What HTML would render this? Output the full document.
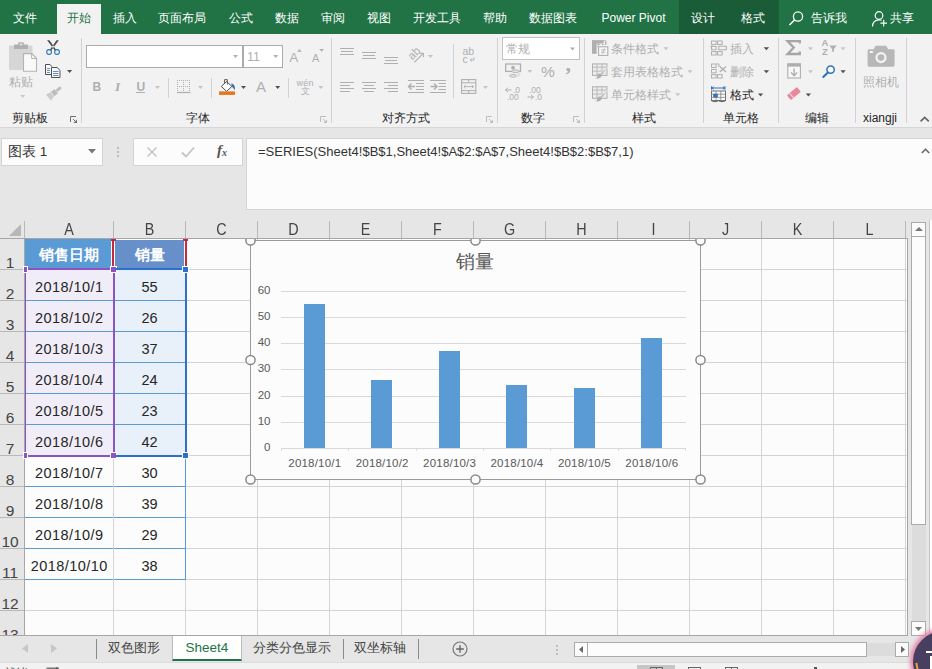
<!DOCTYPE html>
<html><head><meta charset="utf-8"><title>Excel</title>
<style>
*{box-sizing:border-box;margin:0;padding:0}
html,body{width:932px;height:669px;overflow:hidden;background:#e6e6e6}
body{font-family:"Liberation Sans",sans-serif;font-size:12px;color:#444;position:relative}
.abs,.abs *{position:absolute}
#root{position:absolute;left:0;top:0;width:932px;height:669px;overflow:hidden}
#root div,#root span,#root svg{position:absolute}
.t{white-space:nowrap;line-height:1}
.tab{color:#fff;font-size:12px;top:11px;height:14px;line-height:14px;text-align:center;white-space:nowrap}
.gl{color:#262626;font-size:12px;top:111px;height:14px;line-height:14px;text-align:center;white-space:nowrap}
.sep{width:1px;background:#d2d0d4;top:38px;height:85px}
.gry{color:#b1b1b1}
.colh{top:220px;height:18px;line-height:19px;font-size:16.5px;color:#444;text-align:center;transform:scaleX(0.87)}
.rowh{left:-2px;width:24px;text-align:center;font-size:15.5px;color:#444;height:16px;line-height:16px}
.cell{font-size:14.5px;color:#262626;text-align:center;height:30px;line-height:33px;white-space:nowrap}
.yl{font-size:11.5px;color:#595959;width:20px;text-align:right;height:12px;line-height:12px}
.xl{font-size:11.5px;color:#595959;width:68px;text-align:center;height:12px;line-height:12px;white-space:nowrap;letter-spacing:0.2px;text-indent:0.2px}
.stab{font-size:13px;color:#444;top:640px;height:15px;line-height:15px;white-space:nowrap;text-align:center}
</style></head><body><div id="root">

<div style="left:0;top:0;width:932px;height:34px;background:#217346"></div>
<div style="left:679px;top:0;width:100px;height:34px;background:#1b5c38"></div>
<div style="left:57px;top:4px;width:44px;height:31px;background:#f2f2f3"></div>
<div class="tab" style="left:13px;width:24px;">文件</div>
<div class="tab" style="left:67px;width:24px;color:#217346;">开始</div>
<div class="tab" style="left:113px;width:24px;">插入</div>
<div class="tab" style="left:158px;width:48px;">页面布局</div>
<div class="tab" style="left:229px;width:24px;">公式</div>
<div class="tab" style="left:275px;width:24px;">数据</div>
<div class="tab" style="left:321px;width:24px;">审阅</div>
<div class="tab" style="left:367px;width:24px;">视图</div>
<div class="tab" style="left:413px;width:48px;">开发工具</div>
<div class="tab" style="left:483px;width:24px;">帮助</div>
<div class="tab" style="left:529px;width:48px;">数据图表</div>
<div class="tab" style="left:599px;width:69px;">Power Pivot</div>
<div class="tab" style="left:691px;width:24px;">设计</div>
<div class="tab" style="left:741px;width:24px;">格式</div>
<div class="tab" style="left:811px;width:36px;">告诉我</div>
<div class="tab" style="left:890px;width:24px;">共享</div>
<svg style="left:788px;top:10px" width="17" height="17" viewBox="0 0 17 17"><circle cx="10" cy="6.5" r="4.6" fill="none" stroke="#fff" stroke-width="1.3"/><path d="M6.7 9.8L1.5 15" stroke="#fff" stroke-width="1.5" fill="none"/></svg>
<svg style="left:871px;top:10px" width="18" height="18" viewBox="0 0 18 18"><circle cx="8" cy="5.5" r="3.8" fill="none" stroke="#fff" stroke-width="1.2"/><path d="M1.5 16.5c0-4 2.5-6.7 6.5-6.7 1 0 1.8.2 2.5.5" fill="none" stroke="#fff" stroke-width="1.2"/><path d="M12.7 9.8v6.6M9.4 13.1h6.6" stroke="#fff" stroke-width="1.1"/></svg>
<div style="left:0;top:34px;width:932px;height:93px;background:#f2f2f3"></div>
<div style="left:0;top:127px;width:932px;height:1px;background:#d6d6d6"></div>
<div class="sep" style="left:81px"></div>
<div class="sep" style="left:331px"></div>
<div class="sep" style="left:497px"></div>
<div class="sep" style="left:584px"></div>
<div class="sep" style="left:703px"></div>
<div class="sep" style="left:778px"></div>
<div class="sep" style="left:855px"></div>
<div class="sep" style="left:906px"></div>
<div class="sep" style="left:168px;top:78px;height:20px"></div>
<div class="sep" style="left:211px;top:78px;height:20px"></div>
<div class="sep" style="left:288px;top:78px;height:20px"></div>
<div class="sep" style="left:453px;top:44px;height:54px"></div>
<div class="gl" style="left:12px;width:36px">剪贴板</div>
<div class="gl" style="left:186px;width:24px">字体</div>
<div class="gl" style="left:382px;width:48px">对齐方式</div>
<div class="gl" style="left:521px;width:24px">数字</div>
<div class="gl" style="left:632px;width:24px">样式</div>
<div class="gl" style="left:723px;width:36px">单元格</div>
<div class="gl" style="left:805px;width:24px">编辑</div>
<div class="gl" style="left:860px;width:40px">xiangji</div>
<svg style="left:70px;top:116px" width="8" height="8" viewBox="0 0 8 8"><path d="M0.5 6V0.5H6" fill="none" stroke="#707070"/><path d="M7 3.4V7H3.4z" fill="#707070"/><path d="M3 3l3.2 3.2" stroke="#707070" stroke-width="1" fill="none"/></svg>
<svg style="left:320px;top:116px" width="8" height="8" viewBox="0 0 8 8"><path d="M0.5 6V0.5H6" fill="none" stroke="#bcbcbc"/><path d="M7 3.4V7H3.4z" fill="#bcbcbc"/><path d="M3 3l3.2 3.2" stroke="#bcbcbc" stroke-width="1" fill="none"/></svg>
<svg style="left:486px;top:116px" width="8" height="8" viewBox="0 0 8 8"><path d="M0.5 6V0.5H6" fill="none" stroke="#bcbcbc"/><path d="M7 3.4V7H3.4z" fill="#bcbcbc"/><path d="M3 3l3.2 3.2" stroke="#bcbcbc" stroke-width="1" fill="none"/></svg>
<svg style="left:573px;top:116px" width="8" height="8" viewBox="0 0 8 8"><path d="M0.5 6V0.5H6" fill="none" stroke="#bcbcbc"/><path d="M7 3.4V7H3.4z" fill="#bcbcbc"/><path d="M3 3l3.2 3.2" stroke="#bcbcbc" stroke-width="1" fill="none"/></svg>
<div style="left:86px;top:45px;width:157px;height:23px;background:#fff;border:1px solid #ababab"></div>
<div style="left:243px;top:45px;width:40px;height:23px;background:#fff;border:1px solid #ababab"></div>
<div style="left:502px;top:37px;width:78px;height:23px;background:#fff;border:1px solid #c2c2c2"></div>
<div class="t" style="left:9px;top:76px;font-size:12px;color:#afafaf">粘贴</div>
<div class="t" style="left:247px;top:50.5px;font-size:12.5px;color:#afafaf">11</div>
<div class="t" style="left:92.5px;top:80.5px;font-size:12px;font-weight:bold;color:#afafaf">B</div>
<div class="t" style="left:115px;top:79.5px;font-size:13.5px;font-weight:bold;font-style:italic;font-family:'Liberation Serif',serif;color:#afafaf">I</div>
<div class="t" style="left:136.5px;top:80.5px;font-size:12px;font-weight:bold;color:#afafaf">U</div>
<div style="left:136px;top:92px;width:9px;height:1px;background:#afafaf"></div>
<div class="t" style="left:289.5px;top:50.5px;font-size:13px;color:#afafaf">A</div>
<div class="t" style="left:312px;top:52.5px;font-size:11px;color:#afafaf">A</div>
<div class="t" style="left:256px;top:78.5px;font-size:15px;color:#afafaf">A</div>
<div class="t" style="left:296.5px;top:78.5px;font-size:9px;color:#afafaf;letter-spacing:0.3px">wén</div>
<div class="t" style="left:300.5px;top:87px;font-size:8.5px;color:#afafaf">文</div>
<div class="t" style="left:506px;top:42.5px;font-size:12px;color:#afafaf">常规</div>
<div class="t" style="left:541px;top:63.5px;font-size:15.5px;color:#afafaf">%</div>
<div class="t" style="left:565.5px;top:53px;font-size:22px;font-weight:bold;color:#afafaf;font-family:'Liberation Serif',serif">,</div>
<div class="t" style="left:462.5px;top:46px;font-size:10.5px;color:#afafaf">ab</div>
<div class="t" style="left:462.5px;top:54px;font-size:10.5px;color:#afafaf">c</div>
<div class="t" style="left:513px;top:85.5px;font-size:8.5px;color:#afafaf">.0</div>
<div class="t" style="left:507px;top:92.5px;font-size:8.5px;color:#afafaf">.00</div>
<div class="t" style="left:529px;top:85.5px;font-size:8.5px;color:#afafaf">.00</div>
<div class="t" style="left:535px;top:92.5px;font-size:8.5px;color:#afafaf">.0</div>
<div class="t" style="left:611px;top:42.5px;font-size:12px;color:#afafaf">条件格式</div>
<div class="t" style="left:611px;top:65.5px;font-size:12px;color:#afafaf">套用表格格式</div>
<div class="t" style="left:611px;top:88.5px;font-size:12px;color:#afafaf">单元格样式</div>
<div class="t" style="left:730px;top:42.5px;font-size:12px;color:#afafaf">插入</div>
<div class="t" style="left:730px;top:65.5px;font-size:12px;color:#afafaf">删除</div>
<div class="t" style="left:730px;top:88.5px;font-size:12px;color:#262626">格式</div>
<div class="t" style="left:863px;top:75.5px;font-size:12px;color:#afafaf">照相机</div>
<div class="t" style="left:407.5px;top:48px;font-size:11.5px;color:#afafaf;transform:rotate(-45deg);transform-origin:50% 50%">ab</div>
<div class="t" style="left:821.5px;top:38px;font-size:9.5px;color:#afafaf;font-weight:bold">A</div>
<div class="t" style="left:822px;top:46.5px;font-size:9.5px;color:#afafaf;font-weight:bold">Z</div>
<svg style="left:0;top:34px" width="932" height="94" viewBox="0 34 932 94"><rect x="9" y="45.5" width="23.5" height="24.5" rx="1" fill="#d6d6d6"/><path d="M14 49v-3.4q0-1 1-1h3.2v-1.3q0-1 1-1h3.6q1 0 1 1v1.3h3.2q1 0 1 1v3.4z" fill="#b0b0b0"/><rect x="19.7" y="43.6" width="2.6" height="1.6" fill="#e8e8e8"/><path d="M23.5 53.6h8.3l4.7 4.7v12.9h-13z" fill="#f9f9f9" stroke="#b4b4b4" stroke-width="1.1"/><path d="M31.6 53.8v4.7h4.7" fill="none" stroke="#b4b4b4" stroke-width="1"/><path d="M20.3 95h5l-2.5 2.8z" fill="#c4c4c4"/><path d="M47.1 40.3h2.4l6.8 9.6-1.3 0.9zM58.9 40.3h-2.4l-6.8 9.6 1.3 0.9z" fill="#505050"/><circle cx="49.1" cy="52" r="2.4" fill="none" stroke="#2e75b6" stroke-width="1.1"/><circle cx="57" cy="52" r="2.4" fill="none" stroke="#2e75b6" stroke-width="1.1"/><path d="M45.5 64.5h4.4l2.6 2.6v7.4h-7z" fill="#fafafa" stroke="#505050" stroke-width="1"/><path d="M51.5 67.5h5.6l2.9 2.9v7.1h-8.5z" fill="#fafafa" stroke="#505050" stroke-width="1"/><path d="M47 68.5h3M47 70.5h3M47 72.5h3M53 71.5h5.5M53 73.5h5.5M53 75.5h5.5" stroke="#2e75b6" stroke-width="0.8"/><path d="M67 70h5.2l-2.6 3z" fill="#505050"/><g transform="rotate(-40 54 93)" fill="#bdbdbd"><rect x="57.3" y="91.6" width="5.6" height="2.8" rx="0.5"/><rect x="52.3" y="90.2" width="4.6" height="5.6"/><path d="M51.7 90.2L46.8 89v8l4.9-1.2z" opacity="0.7"/></g><path d="M233 55h5l-2.5 3z" fill="#afafaf"/><path d="M273.2 55h5l-2.5 3z" fill="#afafaf"/><path d="M155 86h5l-2.5 3z" fill="#c4c4c4"/><path d="M198 86h5l-2.5 3z" fill="#c4c4c4"/><path d="M241 86h5l-2.5 3z" fill="#505050"/><path d="M275.2 86h5l-2.5 3z" fill="#505050"/><path d="M318.3 86h5l-2.5 3z" fill="#c4c4c4"/><path d="M297.2 51.7h4.6l-2.3-2.7z" fill="#afafaf"/><path d="M319.2 49h4.8l-2.4 2.7z" fill="#afafaf"/><rect x="177" y="80" width="1" height="1" fill="#afafaf"/><rect x="179" y="80" width="1" height="1" fill="#afafaf"/><rect x="181" y="80" width="1" height="1" fill="#afafaf"/><rect x="183" y="80" width="1" height="1" fill="#afafaf"/><rect x="185" y="80" width="1" height="1" fill="#afafaf"/><rect x="187" y="80" width="1" height="1" fill="#afafaf"/><rect x="189" y="80" width="1" height="1" fill="#afafaf"/><rect x="177" y="86" width="1" height="1" fill="#afafaf"/><rect x="179" y="86" width="1" height="1" fill="#afafaf"/><rect x="181" y="86" width="1" height="1" fill="#afafaf"/><rect x="183" y="86" width="1" height="1" fill="#afafaf"/><rect x="185" y="86" width="1" height="1" fill="#afafaf"/><rect x="187" y="86" width="1" height="1" fill="#afafaf"/><rect x="189" y="86" width="1" height="1" fill="#afafaf"/><rect x="177" y="80" width="1" height="1" fill="#afafaf"/><rect x="177" y="82" width="1" height="1" fill="#afafaf"/><rect x="177" y="84" width="1" height="1" fill="#afafaf"/><rect x="177" y="86" width="1" height="1" fill="#afafaf"/><rect x="177" y="88" width="1" height="1" fill="#afafaf"/><rect x="177" y="90" width="1" height="1" fill="#afafaf"/><rect x="183" y="80" width="1" height="1" fill="#afafaf"/><rect x="183" y="82" width="1" height="1" fill="#afafaf"/><rect x="183" y="84" width="1" height="1" fill="#afafaf"/><rect x="183" y="86" width="1" height="1" fill="#afafaf"/><rect x="183" y="88" width="1" height="1" fill="#afafaf"/><rect x="183" y="90" width="1" height="1" fill="#afafaf"/><rect x="189" y="80" width="1" height="1" fill="#afafaf"/><rect x="189" y="82" width="1" height="1" fill="#afafaf"/><rect x="189" y="84" width="1" height="1" fill="#afafaf"/><rect x="189" y="86" width="1" height="1" fill="#afafaf"/><rect x="189" y="88" width="1" height="1" fill="#afafaf"/><rect x="189" y="90" width="1" height="1" fill="#afafaf"/><path d="M177 92.5h13.5" stroke="#afafaf" stroke-width="1.2"/><path d="M226.6 81.5l5.3 4.9-5.3 4.9-5.3-4.9z" fill="#fff" stroke="#505050" stroke-width="1"/><path d="M224.6 83.2v-3.6h2.7v5" fill="none" stroke="#505050" stroke-width="0.9"/><path d="M231.4 83.3c2.7 0.8 4.1 3.5 3.4 6.8l-3-3.7z" fill="#2e75b6"/><rect x="219" y="91.4" width="16" height="3.5" fill="#e8751a"/><path d="M340 48.5H354M341 51.5H353M340 54.5H354" stroke="#afafaf" stroke-width="1" fill="none"/><path d="M362 52.5H376M363 55.5H375M362 58.5H376" stroke="#afafaf" stroke-width="1" fill="none"/><path d="M384 57.5H398M385 60.5H397M384 63.5H398" stroke="#afafaf" stroke-width="1" fill="none"/><path d="M340 82.5H354M340 85.5H350M340 88.5H354M340 91.5H350" stroke="#afafaf" stroke-width="1" fill="none"/><path d="M362 82.5H376M364 85.5H374M362 88.5H376M364 91.5H374" stroke="#afafaf" stroke-width="1" fill="none"/><path d="M384 82.5H398M388 85.5H398M384 88.5H398M388 91.5H398" stroke="#afafaf" stroke-width="1" fill="none"/><path d="M414.3 62.3L423 53.6" stroke="#afafaf" stroke-width="1.1" fill="none"/><path d="M419.3 53.3h4v4" stroke="#afafaf" stroke-width="1.1" fill="none"/><path d="M428 55h5l-2.5 3z" fill="#c4c4c4"/><path d="M408 80.5H424M408 92.5H424" stroke="#afafaf" stroke-width="1" fill="none"/><path d="M416 83.5H424M416 86.5H424M416 89.5H424" stroke="#afafaf" stroke-width="1" fill="none"/><path d="M408.5 86.5h6.5M411.5 83.5l-3 3 3 3" stroke="#afafaf" stroke-width="1.4" fill="none"/><path d="M430 80.5H446M430 92.5H446" stroke="#afafaf" stroke-width="1" fill="none"/><path d="M438.5 83.5H446M438.5 86.5H446M438.5 89.5H446" stroke="#afafaf" stroke-width="1" fill="none"/><path d="M430.5 86.5h6.5M434 83.5l3 3-3 3" stroke="#afafaf" stroke-width="1.4" fill="none"/><path d="M474 57.5v2.5h-3.5M472 58.3l-1.7 1.7 1.7 1.7" stroke="#afafaf" stroke-width="0.9" fill="none"/><rect x="461.6" y="79.6" width="14.2" height="13.8" fill="none" stroke="#afafaf" stroke-width="1.1"/><path d="M461.6 82.8h14.2M461.6 90.6h14.2M468.7 79.6v3.2M468.7 90.6v2.8" stroke="#afafaf" stroke-width="1" fill="none"/><path d="M464 86.6h9.4M465.6 85l-1.7 1.6 1.7 1.6M471.8 85l1.7 1.6-1.7 1.6" stroke="#afafaf" stroke-width="0.9" fill="none"/><path d="M483 86h5l-2.5 3z" fill="#c4c4c4"/><path d="M570 47.4h5l-2.5 3z" fill="#afafaf"/><rect x="505.7" y="64" width="14.8" height="7.4" fill="none" stroke="#afafaf" stroke-width="1.3"/><circle cx="513" cy="67.7" r="1.9" fill="#afafaf"/><ellipse cx="515.5" cy="71.3" rx="3.6" ry="1.4" fill="#e0e0e0" stroke="#afafaf" stroke-width="0.8"/><ellipse cx="513" cy="75.8" rx="3.6" ry="1.4" fill="#e0e0e0" stroke="#afafaf" stroke-width="0.8"/><path d="M517.5 74h3M517.5 76h2" stroke="#c4c4c4" stroke-width="0.8"/><path d="M527.3 70h5l-2.5 3z" fill="#c4c4c4"/><path d="M505.5 90h6M508 87.7l-2.4 2.3 2.4 2.3" stroke="#afafaf" stroke-width="1" fill="none"/><path d="M527.5 97h6M531 94.7l2.4 2.3-2.4 2.3" stroke="#afafaf" stroke-width="1" fill="none"/><rect x="592" y="40.3" width="4.6" height="13.5" fill="#afafaf"/><rect x="592" y="40.3" width="11.6" height="3.2" fill="#afafaf"/><path d="M598 44.5h2.2M602 44.5h2.2M598 40.3v3M602 40.3v3M606 40.8v4" stroke="#afafaf" stroke-width="0.9"/><path d="M598 47.5v-6.8h7.5v4" fill="none" stroke="#afafaf" stroke-width="0.8"/><rect x="598.6" y="46.8" width="9.2" height="8.6" fill="#f8f8f8" stroke="#afafaf" stroke-width="1.1"/><path d="M601 49.8h4.6M601 52.2h4.6M604.6 48.4l-2.4 5.4" stroke="#afafaf" stroke-width="0.8"/><rect x="592.5" y="63.9" width="14.5" height="11.5" fill="#ececec" stroke="#afafaf" stroke-width="1"/><path d="M592.5 67.2h14.5M592.5 71.2h9M597 63.9v11.5M602 63.9v8" stroke="#afafaf" stroke-width="0.8"/><path d="M608.3 66.6l-6.2 8.3-1.8-1.3z" fill="#afafaf" stroke="#f3f3f3" stroke-width="0.6"/><path d="M600.6 73.7c-2.6-0.6-4 1.4-3.4 3.6-0.6 0.6-1.6 0.7-2.4 0.6 2.4 1.4 6.4 0.6 7.3-2.9z" fill="#afafaf"/><rect x="592.5" y="86.8" width="14.5" height="11.5" fill="#ececec" stroke="#afafaf" stroke-width="1"/><path d="M592.5 90.1h14.5M592.5 94.1h9M597 86.8v11.5M602 86.8v8" stroke="#afafaf" stroke-width="0.8"/><path d="M608.3 89.5l-6.2 8.3-1.8-1.3z" fill="#afafaf" stroke="#f3f3f3" stroke-width="0.6"/><path d="M600.6 96.6c-2.6-0.6-4 1.4-3.4 3.6-0.6 0.6-1.6 0.7-2.4 0.6 2.4 1.4 6.4 0.6 7.3-2.9z" fill="#afafaf"/><path d="M663.5 47.3h5l-2.5 3z" fill="#c4c4c4"/><path d="M687.5 70.3h5l-2.5 3z" fill="#c4c4c4"/><path d="M675.2 93.3h5l-2.5 3z" fill="#c4c4c4"/><rect x="711.5" y="41" width="4.6" height="3.4" fill="none" stroke="#afafaf" stroke-width="1"/><rect x="717.5" y="41" width="4.6" height="3.4" fill="none" stroke="#afafaf" stroke-width="1"/><rect x="711.5" y="51.6" width="4.6" height="3.4" fill="none" stroke="#afafaf" stroke-width="1"/><rect x="717.5" y="51.6" width="4.6" height="3.4" fill="none" stroke="#afafaf" stroke-width="1"/><rect x="711.5" y="46.4" width="4.6" height="3.4" fill="none" stroke="#afafaf" stroke-width="1"/><rect x="718.8" y="46.2" width="7.6" height="3.6" fill="none" stroke="#afafaf" stroke-width="1"/><path d="M712.3 45.2l-1.6 1.6 1.6 1.6" stroke="#afafaf" stroke-width="1" fill="none"/><rect x="711.5" y="64" width="4.6" height="3.4" fill="none" stroke="#afafaf" stroke-width="1"/><rect x="711.5" y="74.6" width="4.6" height="3.4" fill="none" stroke="#afafaf" stroke-width="1"/><rect x="717.5" y="74.6" width="4.6" height="3.4" fill="none" stroke="#afafaf" stroke-width="1"/><rect x="711.5" y="69.4" width="4.6" height="3.4" fill="none" stroke="#afafaf" stroke-width="1"/><path d="M719.8 66.5l6.2 5.6M726 66.5l-6.2 5.6" stroke="#afafaf" stroke-width="1.3" fill="none"/><path d="M716.5 64h2.5v3" stroke="#afafaf" stroke-width="1" fill="none"/><path d="M711.5 88h13.5M711.5 86.3v3.4M725 86.3v3.4M713.6 86.6l-1.6 1.4 1.6 1.4M722.9 86.6l1.6 1.4-1.6 1.4" stroke="#2e75b6" stroke-width="1" fill="none"/><rect x="711.5" y="91" width="14" height="9.6" fill="#fafafa" stroke="#666" stroke-width="0.9"/><path d="M711.5 94.2h14M711.5 97.4h14M716 91v9.6M720.8 91v9.6" stroke="#777" stroke-width="0.7"/><rect x="713.2" y="93.8" width="4.6" height="3.6" fill="#2e75b6"/><path d="M711.5 100.6c2 1.4 5 1.4 7 0 2 1.4 5 1.4 7 0" stroke="#505050" stroke-width="0.9" fill="none"/><path d="M763.7 47.2h5.4l-2.7 3z" fill="#505050"/><path d="M763.7 70.2h5.4l-2.7 3z" fill="#505050"/><path d="M758 93.4h5.2l-2.6 3z" fill="#505050"/><path d="M799.8 43.6v-2.4h-12.2l6.2 6.4-6.2 6.4h12.2v-2.4" fill="none" stroke="#a6a6a6" stroke-width="2.3" stroke-linejoin="miter"/><path d="M808 47.3h5l-2.5 3z" fill="#c4c4c4"/><rect x="787.8" y="64" width="12.6" height="14" fill="#f8f8f8" stroke="#afafaf" stroke-width="1.1"/><rect x="787.3" y="63.4" width="13.6" height="3.2" fill="#afafaf"/><path d="M794.1 68.5v7M791 72.6l3.1 3.1 3.1-3.1" stroke="#afafaf" stroke-width="1.4" fill="none"/><path d="M808 70.3h5l-2.5 3z" fill="#c4c4c4"/><g transform="rotate(-40 794 93.5)"><rect x="787.4" y="90.4" width="13" height="6.2" rx="0.8" fill="#e8889c"/><rect x="790.4" y="90.4" width="0.9" height="6.2" fill="#f6d4db"/></g><path d="M805.8 93.4h5.2l-2.6 3z" fill="#505050"/><path d="M829.3 45.6h7.4l-2.8 3.4v3.2l-1.8-1v-2.2z" fill="#afafaf"/><path d="M840.5 47.3h5l-2.5 3z" fill="#c4c4c4"/><circle cx="830.6" cy="69.6" r="3.7" fill="#fafafa" stroke="#2e75b6" stroke-width="1.5"/><path d="M827.9 72.6l-4.6 4.4" stroke="#2e75b6" stroke-width="2.1" stroke-linecap="round"/><path d="M840.5 70.3h5.2l-2.6 3z" fill="#505050"/><path d="M869 49.3h4.6l2-3.6h10.6l2 3.6h5q1.4 0 1.4 1.4v14.6q0 1.4-1.4 1.4h-24.2q-1.4 0-1.4-1.4v-14.6q0-1.4 1.4-1.4z" fill="#b7b7b7"/><circle cx="881" cy="57.6" r="5.6" fill="#f3f3f3"/><circle cx="881" cy="57.6" r="3.3" fill="#b7b7b7"/><rect x="869.6" y="51" width="3.4" height="2" fill="#f3f3f3"/><path d="M920.6 121.4l4.1-4 4.1 4" stroke="#666" stroke-width="1.7" fill="none"/></svg>
<div style="left:1px;top:138px;width:102px;height:28px;background:#fcfcfc;border:1px solid #d4d4d4"></div>
<div class="t" style="left:8px;top:145px;font-size:13.5px;color:#333">图表 1</div>
<svg style="left:88px;top:149px" width="8" height="5"><path d="M0 0h8L4 4.5z" fill="#777"/></svg>
<div style="left:117px;top:147px;width:2px;height:2px;background:#bdbdbd"></div>
<div style="left:117px;top:151px;width:2px;height:2px;background:#bdbdbd"></div>
<div style="left:117px;top:155px;width:2px;height:2px;background:#bdbdbd"></div>
<div style="left:133px;top:138px;width:110px;height:28px;background:#fcfcfc;border:1px solid #d4d4d4"></div>
<svg style="left:146px;top:146px" width="12" height="12"><path d="M1.5 1.5l9 9M10.5 1.5l-9 9" stroke="#c3c3c3" stroke-width="1.4" fill="none"/></svg>
<svg style="left:181px;top:146px" width="14" height="12"><path d="M1 6.5l4 4L13 1.5" stroke="#c3c3c3" stroke-width="1.8" fill="none"/></svg>
<div class="t" style="left:217px;top:143px;font-family:'Liberation Serif',serif;font-style:italic;font-size:15px;color:#555;font-weight:bold">f<span style="position:relative;font-size:10px;left:0;top:1px">x</span></div>
<div style="left:246px;top:138px;width:690px;height:72px;background:#fcfcfc;border:1px solid #d4d4d4"></div>
<div class="t" id="fx" style="left:258px;top:145px;font-size:13px;color:#333;letter-spacing:0px">=SERIES(Sheet4!$B$1,Sheet4!$A$2:$A$7,Sheet4!$B$2:$B$7,1)</div>
<svg style="left:921px;top:148px" width="9" height="6"><path d="M0.8 5L4.5 1.3 8.2 5" stroke="#666" stroke-width="1.6" fill="none"/></svg>
<div style="left:25px;top:239px;width:882px;height:396px;background:#fcfcfc"></div>
<div style="left:24px;top:221px;width:1px;height:18px;background:#b9b9b9"></div>
<div style="left:113px;top:221px;width:1px;height:18px;background:#b9b9b9"></div>
<div style="left:185px;top:221px;width:1px;height:18px;background:#b9b9b9"></div>
<div style="left:257px;top:221px;width:1px;height:18px;background:#b9b9b9"></div>
<div style="left:329px;top:221px;width:1px;height:18px;background:#b9b9b9"></div>
<div style="left:401px;top:221px;width:1px;height:18px;background:#b9b9b9"></div>
<div style="left:473px;top:221px;width:1px;height:18px;background:#b9b9b9"></div>
<div style="left:545px;top:221px;width:1px;height:18px;background:#b9b9b9"></div>
<div style="left:617px;top:221px;width:1px;height:18px;background:#b9b9b9"></div>
<div style="left:689px;top:221px;width:1px;height:18px;background:#b9b9b9"></div>
<div style="left:761px;top:221px;width:1px;height:18px;background:#b9b9b9"></div>
<div style="left:833px;top:221px;width:1px;height:18px;background:#b9b9b9"></div>
<div style="left:905px;top:221px;width:1px;height:18px;background:#b9b9b9"></div>
<div style="left:0;top:238px;width:907px;height:1px;background:#a6a6a6"></div>
<div style="left:24px;top:239px;width:1px;height:396px;background:#a6a6a6"></div>
<svg style="left:9px;top:224px" width="13" height="13"><path d="M12 0v12H0z" fill="#b7b7b7"/></svg>
<div class="colh" style="left:25px;width:88px">A</div>
<div class="colh" style="left:114px;width:71px">B</div>
<div class="colh" style="left:186px;width:71px">C</div>
<div class="colh" style="left:258px;width:71px">D</div>
<div class="colh" style="left:330px;width:71px">E</div>
<div class="colh" style="left:402px;width:71px">F</div>
<div class="colh" style="left:474px;width:71px">G</div>
<div class="colh" style="left:546px;width:71px">H</div>
<div class="colh" style="left:618px;width:71px">I</div>
<div class="colh" style="left:690px;width:71px">J</div>
<div class="colh" style="left:762px;width:71px">K</div>
<div class="colh" style="left:834px;width:71px">L</div>
<div style="left:113px;top:239px;width:1px;height:396px;background:#d4d4d4"></div>
<div style="left:185px;top:239px;width:1px;height:396px;background:#d4d4d4"></div>
<div style="left:257px;top:239px;width:1px;height:396px;background:#d4d4d4"></div>
<div style="left:329px;top:239px;width:1px;height:396px;background:#d4d4d4"></div>
<div style="left:401px;top:239px;width:1px;height:396px;background:#d4d4d4"></div>
<div style="left:473px;top:239px;width:1px;height:396px;background:#d4d4d4"></div>
<div style="left:545px;top:239px;width:1px;height:396px;background:#d4d4d4"></div>
<div style="left:617px;top:239px;width:1px;height:396px;background:#d4d4d4"></div>
<div style="left:689px;top:239px;width:1px;height:396px;background:#d4d4d4"></div>
<div style="left:761px;top:239px;width:1px;height:396px;background:#d4d4d4"></div>
<div style="left:833px;top:239px;width:1px;height:396px;background:#d4d4d4"></div>
<div style="left:905px;top:239px;width:1px;height:396px;background:#d4d4d4"></div>
<div style="left:25px;top:269px;width:882px;height:1px;background:#d4d4d4"></div>
<div style="left:0px;top:269px;width:24px;height:1px;background:#b9b9b9"></div>
<div style="left:25px;top:300px;width:882px;height:1px;background:#d4d4d4"></div>
<div style="left:0px;top:300px;width:24px;height:1px;background:#b9b9b9"></div>
<div style="left:25px;top:331px;width:882px;height:1px;background:#d4d4d4"></div>
<div style="left:0px;top:331px;width:24px;height:1px;background:#b9b9b9"></div>
<div style="left:25px;top:362px;width:882px;height:1px;background:#d4d4d4"></div>
<div style="left:0px;top:362px;width:24px;height:1px;background:#b9b9b9"></div>
<div style="left:25px;top:393px;width:882px;height:1px;background:#d4d4d4"></div>
<div style="left:0px;top:393px;width:24px;height:1px;background:#b9b9b9"></div>
<div style="left:25px;top:424px;width:882px;height:1px;background:#d4d4d4"></div>
<div style="left:0px;top:424px;width:24px;height:1px;background:#b9b9b9"></div>
<div style="left:25px;top:455px;width:882px;height:1px;background:#d4d4d4"></div>
<div style="left:0px;top:455px;width:24px;height:1px;background:#b9b9b9"></div>
<div style="left:25px;top:486px;width:882px;height:1px;background:#d4d4d4"></div>
<div style="left:0px;top:486px;width:24px;height:1px;background:#b9b9b9"></div>
<div style="left:25px;top:517px;width:882px;height:1px;background:#d4d4d4"></div>
<div style="left:0px;top:517px;width:24px;height:1px;background:#b9b9b9"></div>
<div style="left:25px;top:548px;width:882px;height:1px;background:#d4d4d4"></div>
<div style="left:0px;top:548px;width:24px;height:1px;background:#b9b9b9"></div>
<div style="left:25px;top:579px;width:882px;height:1px;background:#d4d4d4"></div>
<div style="left:0px;top:579px;width:24px;height:1px;background:#b9b9b9"></div>
<div style="left:25px;top:610px;width:882px;height:1px;background:#d4d4d4"></div>
<div style="left:0px;top:610px;width:24px;height:1px;background:#b9b9b9"></div>
<div class="rowh" style="top:254.5px">1</div>
<div class="rowh" style="top:285.5px">2</div>
<div class="rowh" style="top:316.5px">3</div>
<div class="rowh" style="top:347.5px">4</div>
<div class="rowh" style="top:378.5px">5</div>
<div class="rowh" style="top:409.5px">6</div>
<div class="rowh" style="top:440.5px">7</div>
<div class="rowh" style="top:471.5px">8</div>
<div class="rowh" style="top:502.5px">9</div>
<div class="rowh" style="top:533.5px">10</div>
<div class="rowh" style="top:564.5px">11</div>
<div class="rowh" style="top:595.5px">12</div>
<div class="rowh" style="top:626.5px">13</div>
<div style="left:907px;top:238px;width:1px;height:398px;background:#a6a6a6"></div>
<div style="left:0;top:635px;width:908px;height:1px;background:#a6a6a6"></div>
<div style="left:25px;top:239px;width:86px;height:29px;background:#5b9bd5"></div>
<div style="left:115px;top:240px;width:69px;height:28px;background:#6790cb"></div>
<div style="left:25px;top:270px;width:88px;height:185px;background:#f1edf8"></div>
<div style="left:115px;top:270px;width:70px;height:185px;background:#e8f0fa"></div>
<div style="left:25px;top:300px;width:161px;height:1px;background:#5b9bd5"></div>
<div style="left:25px;top:331px;width:161px;height:1px;background:#5b9bd5"></div>
<div style="left:25px;top:362px;width:161px;height:1px;background:#5b9bd5"></div>
<div style="left:25px;top:393px;width:161px;height:1px;background:#5b9bd5"></div>
<div style="left:25px;top:424px;width:161px;height:1px;background:#5b9bd5"></div>
<div style="left:25px;top:455px;width:161px;height:1px;background:#5b9bd5"></div>
<div style="left:25px;top:486px;width:161px;height:1px;background:#5b9bd5"></div>
<div style="left:25px;top:517px;width:161px;height:1px;background:#5b9bd5"></div>
<div style="left:25px;top:548px;width:161px;height:1px;background:#5b9bd5"></div>
<div style="left:25px;top:579px;width:161px;height:1px;background:#5b9bd5"></div>
<div style="left:185px;top:456px;width:1px;height:124px;background:#5b9bd5"></div>
<div style="left:113px;top:456px;width:1px;height:124px;background:#d4d4d4"></div>
<div class="cell" style="left:25px;top:240px;width:88px;color:#fff;font-weight:bold;font-size:15px;line-height:30px">销售日期</div>
<div class="cell" style="left:114px;top:240px;width:71px;color:#fff;font-weight:bold;font-size:15px;line-height:30px">销量</div>
<div class="cell" style="left:25px;top:271px;width:88px;letter-spacing:0.45px;text-indent:0.45px">2018/10/1</div>
<div class="cell" style="left:114px;top:271px;width:71px">55</div>
<div class="cell" style="left:25px;top:302px;width:88px;letter-spacing:0.45px;text-indent:0.45px">2018/10/2</div>
<div class="cell" style="left:114px;top:302px;width:71px">26</div>
<div class="cell" style="left:25px;top:333px;width:88px;letter-spacing:0.45px;text-indent:0.45px">2018/10/3</div>
<div class="cell" style="left:114px;top:333px;width:71px">37</div>
<div class="cell" style="left:25px;top:364px;width:88px;letter-spacing:0.45px;text-indent:0.45px">2018/10/4</div>
<div class="cell" style="left:114px;top:364px;width:71px">24</div>
<div class="cell" style="left:25px;top:395px;width:88px;letter-spacing:0.45px;text-indent:0.45px">2018/10/5</div>
<div class="cell" style="left:114px;top:395px;width:71px">23</div>
<div class="cell" style="left:25px;top:426px;width:88px;letter-spacing:0.45px;text-indent:0.45px">2018/10/6</div>
<div class="cell" style="left:114px;top:426px;width:71px">42</div>
<div class="cell" style="left:25px;top:457px;width:88px;letter-spacing:0.45px;text-indent:0.45px">2018/10/7</div>
<div class="cell" style="left:114px;top:457px;width:71px">30</div>
<div class="cell" style="left:25px;top:488px;width:88px;letter-spacing:0.45px;text-indent:0.45px">2018/10/8</div>
<div class="cell" style="left:114px;top:488px;width:71px">39</div>
<div class="cell" style="left:25px;top:519px;width:88px;letter-spacing:0.45px;text-indent:0.45px">2018/10/9</div>
<div class="cell" style="left:114px;top:519px;width:71px">29</div>
<div class="cell" style="left:25px;top:550px;width:88px;letter-spacing:0.45px;text-indent:0.45px">2018/10/10</div>
<div class="cell" style="left:114px;top:550px;width:71px">38</div>
<div style="left:112px;top:239px;width:2px;height:29px;background:#c22a3d"></div>
<div style="left:185px;top:239px;width:2px;height:29px;background:#c22a3d"></div>
<div style="left:111px;top:239px;width:5px;height:2px;background:#c22a3d"></div>
<div style="left:183px;top:239px;width:5px;height:2px;background:#c22a3d"></div>
<div style="left:25px;top:268px;width:88px;height:2px;background:#8a55c0"></div>
<div style="left:113px;top:270px;width:2px;height:186px;background:#8a55c0"></div>
<div style="left:25px;top:455px;width:88px;height:2px;background:#8a55c0"></div>
<div style="left:25px;top:270px;width:1px;height:186px;background:#8a55c0"></div>
<div style="left:111px;top:267px;width:5px;height:5px;background:#8a55c0;box-shadow:0 0 0 1px #fff"></div>
<div style="left:111px;top:453px;width:5px;height:5px;background:#8a55c0;box-shadow:0 0 0 1px #fff"></div>
<div style="left:24px;top:267px;width:3px;height:5px;background:#8a55c0;box-shadow:0 0 0 1px #fff"></div>
<div style="left:24px;top:453px;width:3px;height:5px;background:#8a55c0;box-shadow:0 0 0 1px #fff"></div>
<div style="left:116px;top:268px;width:70px;height:2px;background:#2c6fd1"></div>
<div style="left:185px;top:270px;width:2px;height:186px;background:#2c6fd1"></div>
<div style="left:116px;top:455px;width:70px;height:2px;background:#2c6fd1"></div>
<div style="left:183px;top:267px;width:5px;height:5px;background:#2c6fd1;box-shadow:0 0 0 1px #fff"></div>
<div style="left:183px;top:453px;width:5px;height:5px;background:#2c6fd1;box-shadow:0 0 0 1px #fff"></div>
<div style="left:250px;top:240px;width:451px;height:240px;background:#fcfcfc;border:1px solid #9a9a9a"></div>
<div class="t" style="left:425px;top:252px;width:100px;text-align:center;font-size:19px;color:#595959;line-height:20px;height:20px">销量</div>
<div style="left:281px;top:448px;width:405px;height:1px;background:#d9d9d9"></div>
<div class="yl" style="left:250.5px;top:441px">0</div>
<div style="left:281px;top:422px;width:405px;height:1px;background:#d9d9d9"></div>
<div class="yl" style="left:250.5px;top:415px">10</div>
<div style="left:281px;top:396px;width:405px;height:1px;background:#d9d9d9"></div>
<div class="yl" style="left:250.5px;top:389px">20</div>
<div style="left:281px;top:369px;width:405px;height:1px;background:#d9d9d9"></div>
<div class="yl" style="left:250.5px;top:362px">30</div>
<div style="left:281px;top:343px;width:405px;height:1px;background:#d9d9d9"></div>
<div class="yl" style="left:250.5px;top:336px">40</div>
<div style="left:281px;top:317px;width:405px;height:1px;background:#d9d9d9"></div>
<div class="yl" style="left:250.5px;top:310px">50</div>
<div style="left:281px;top:291px;width:405px;height:1px;background:#d9d9d9"></div>
<div class="yl" style="left:250.5px;top:284px">60</div>
<div style="left:303.9px;top:304.4px;width:21px;height:143.6px;background:#5b9bd5"></div>
<div class="xl" style="left:280.7px;top:457px">2018/10/1</div>
<div style="left:371.3px;top:380.1px;width:21px;height:67.9px;background:#5b9bd5"></div>
<div class="xl" style="left:348.1px;top:457px">2018/10/2</div>
<div style="left:438.7px;top:351.4px;width:21px;height:96.6px;background:#5b9bd5"></div>
<div class="xl" style="left:415.5px;top:457px">2018/10/3</div>
<div style="left:506.1px;top:385.4px;width:21px;height:62.6px;background:#5b9bd5"></div>
<div class="xl" style="left:482.9px;top:457px">2018/10/4</div>
<div style="left:573.5px;top:388.0px;width:21px;height:60.0px;background:#5b9bd5"></div>
<div class="xl" style="left:550.3px;top:457px">2018/10/5</div>
<div style="left:640.9px;top:338.4px;width:21px;height:109.6px;background:#5b9bd5"></div>
<div class="xl" style="left:617.7px;top:457px">2018/10/6</div>
<div style="left:280.7px;top:448px;width:1px;height:3px;background:#d9d9d9"></div>
<div style="left:348.1px;top:448px;width:1px;height:3px;background:#d9d9d9"></div>
<div style="left:415.5px;top:448px;width:1px;height:3px;background:#d9d9d9"></div>
<div style="left:482.9px;top:448px;width:1px;height:3px;background:#d9d9d9"></div>
<div style="left:550.3px;top:448px;width:1px;height:3px;background:#d9d9d9"></div>
<div style="left:617.7px;top:448px;width:1px;height:3px;background:#d9d9d9"></div>
<div style="left:685.1px;top:448px;width:1px;height:3px;background:#d9d9d9"></div>
<svg style="left:240px;top:239px;overflow:hidden" width="472" height="252" viewBox="240 239 472 252">
<circle cx="250.5" cy="240.5" r="4.6" fill="#fcfcfc" stroke="#8a8a8a" stroke-width="1.5"/>
<circle cx="475.5" cy="240.5" r="4.6" fill="#fcfcfc" stroke="#8a8a8a" stroke-width="1.5"/>
<circle cx="700.5" cy="240.5" r="4.6" fill="#fcfcfc" stroke="#8a8a8a" stroke-width="1.5"/>
<circle cx="250.5" cy="360" r="4.6" fill="#fcfcfc" stroke="#8a8a8a" stroke-width="1.5"/>
<circle cx="700.5" cy="360" r="4.6" fill="#fcfcfc" stroke="#8a8a8a" stroke-width="1.5"/>
<circle cx="250.5" cy="479.5" r="4.6" fill="#fcfcfc" stroke="#8a8a8a" stroke-width="1.5"/>
<circle cx="475.5" cy="479.5" r="4.6" fill="#fcfcfc" stroke="#8a8a8a" stroke-width="1.5"/>
<circle cx="700.5" cy="479.5" r="4.6" fill="#fcfcfc" stroke="#8a8a8a" stroke-width="1.5"/>
</svg>
<div style="left:908px;top:220px;width:21px;height:416px;background:#e6e6e6"></div>
<div style="left:912px;top:237px;width:14px;height:385px;background:#dcdcdc"></div>
<div style="left:911px;top:222px;width:15px;height:15px;background:#fcfcfc;border:1px solid #ababab"></div>
<svg style="left:914.5px;top:227px" width="8" height="4"><path d="M0 4h8L4 0z" fill="#777"/></svg>
<div style="left:911px;top:236px;width:15px;height:289px;background:#fcfcfc;border:1px solid #ababab"></div>
<div style="left:911px;top:621px;width:15px;height:15px;background:#fcfcfc;border:1px solid #ababab"></div>
<svg style="left:915px;top:627px" width="7" height="4"><path d="M0 0h7L3.5 4z" fill="#777"/></svg>
<div style="left:929px;top:220px;width:3px;height:416px;background:#fff;border-left:1px solid #c6c6c6"></div>
<div style="left:0;top:636px;width:932px;height:28px;background:#e6e6e6"></div>
<svg style="left:22px;top:644px" width="6" height="9"><path d="M6 0v9L0 4.5z" fill="#c6c6c6"/></svg>
<svg style="left:51px;top:644px" width="6" height="9"><path d="M0 0v9L6 4.5z" fill="#c6c6c6"/></svg>
<div style="left:96px;top:639px;width:1px;height:20px;background:#8a8a8a"></div>
<div class="stab" style="left:104px;width:60px">双色图形</div>
<div style="left:172px;top:636px;width:70px;height:25px;background:#fff;border-left:1px solid #bdbdbd;border-right:1px solid #bdbdbd;border-bottom:2px solid #217346"></div>
<div class="stab" style="left:172px;width:70px;color:#217346;font-size:13.5px">Sheet4</div>
<div class="stab" style="left:250px;width:84px">分类分色显示</div>
<div style="left:343px;top:639px;width:1px;height:20px;background:#8a8a8a"></div>
<div class="stab" style="left:350px;width:60px">双坐标轴</div>
<div style="left:418px;top:639px;width:1px;height:20px;background:#8a8a8a"></div>
<svg style="left:451px;top:640px" width="18" height="18"><circle cx="9" cy="9" r="7" fill="none" stroke="#777" stroke-width="1.2"/><path d="M9 5.2v7.6M5.2 9h7.6" stroke="#666" stroke-width="1.4"/></svg>
<div style="left:556px;top:645px;width:2px;height:2px;background:#bdbdbd"></div>
<div style="left:556px;top:649px;width:2px;height:2px;background:#bdbdbd"></div>
<div style="left:556px;top:653px;width:2px;height:2px;background:#bdbdbd"></div>
<div style="left:587px;top:643px;width:308px;height:13px;background:#dcdcdc"></div>
<div style="left:574px;top:642px;width:14px;height:15px;background:#fcfcfc;border:1px solid #ababab"></div>
<svg style="left:578.5px;top:646px" width="4" height="7"><path d="M4 0v7L0 3.5z" fill="#666"/></svg>
<div style="left:587px;top:642px;width:280px;height:15px;background:#fcfcfc;border:1px solid #ababab"></div>
<div style="left:895px;top:642px;width:14px;height:15px;background:#fcfcfc;border:1px solid #ababab"></div>
<svg style="left:901px;top:646px" width="4" height="7"><path d="M0 0v7L4 3.5z" fill="#666"/></svg>
<div style="left:0;top:663px;width:932px;height:6px;background:#f2f2f3"></div>
<div style="left:0;top:662px;width:932px;height:1px;background:#dcdcdc"></div>
<div class="t" style="left:4px;top:667px;font-size:12px;color:#444">就绪</div>
<svg style="left:46px;top:666px" width="14" height="6"><rect x="0.5" y="1.5" width="9" height="6" fill="#777"/><circle cx="11" cy="3" r="2" fill="#666"/></svg>
<div style="left:637px;top:665px;width:38px;height:6px;background:#c6c6c6"></div>
<div style="left:650px;top:667px;width:13px;height:4px;border:1px solid #666;border-bottom:none"></div>
<div style="left:688px;top:667px;width:13px;height:4px;border:1px solid #666;border-bottom:none"></div>
<div style="left:725px;top:667px;width:13px;height:4px;border:1px solid #666;border-bottom:none"></div>
<div style="left:656px;top:667px;width:1px;height:4px;background:#666"></div>
<div style="left:731px;top:667px;width:1px;height:4px;background:#666"></div>
<div style="left:814px;top:667px;width:3px;height:4px;background:#555"></div>
<div style="left:909.5px;top:627.5px;width:67px;height:67px;border-radius:50%;background:#e47aa4;filter:blur(2px);opacity:0.9"></div>
<div style="left:912.6px;top:630.6px;width:61px;height:61px;border-radius:50%;background:#463f60"></div>
<div style="left:926px;top:651px;width:8px;height:2px;background:#fff"></div>
<div style="left:930px;top:656px;width:3px;height:13px;background:#fff"></div>
<div style="left:916px;top:663px;width:2px;height:7px;background:#f2a03c;transform:rotate(-12deg)"></div>
</div></body></html>
